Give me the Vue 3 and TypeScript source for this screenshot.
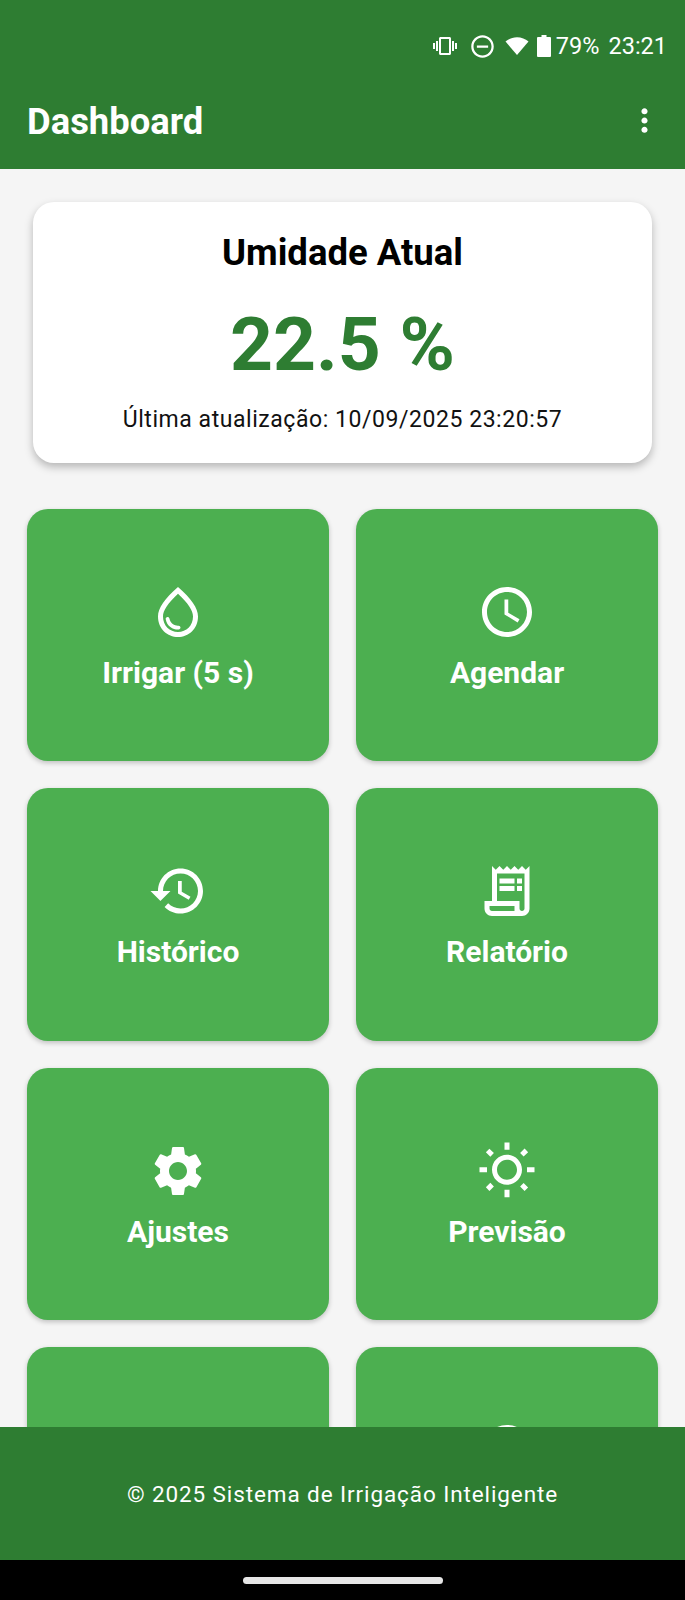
<script setup lang="ts">
interface Action { label: string; icon: string; extra?: string }
const actions: Action[] = [
  { label: 'Irrigar (5 s)', icon: 'M12,2c-5.33,4.55-8,8.48-8,11.8c0,4.98,3.8,8.2,8,8.2s8-3.22,8-8.2C20,10.48,17.33,6.55,12,2z M12,20c-3.35,0-6-2.57-6-6.2c0-2.34,1.95-5.44,6-9.14c4.05,3.7,6,6.79,6,9.14C18,17.43,15.35,20,12,20z M7.83,14c0.37,0,0.67,0.26,0.74,0.62c0.41,2.22,2.28,2.98,3.64,2.87c0.43-0.02,0.79,0.32,0.79,0.75c0,0.4-0.32,0.73-0.72,0.75c-2.13,0.13-4.62-1.09-5.19-4.12C7.01,14.42,7.37,14,7.83,14z' },
  { label: 'Agendar', icon: 'M11.99 2C6.47 2 2 6.48 2 12s4.47 10 9.99 10C17.52 22 22 17.52 22 12S17.52 2 11.99 2zM12 20c-4.42 0-8-3.58-8-8s3.58-8 8-8 8 3.58 8 8-3.58 8-8 8zM12.5 7H11v6l5.25 3.15.75-1.23-4.5-2.67z' },
  { label: 'Histórico', icon: 'M13 3c-4.97 0-9 4.03-9 9H1l3.89 3.89.07.14L9 12H6c0-3.87 3.13-7 7-7s7 3.13 7 7-3.13 7-7 7c-1.93 0-3.68-.79-4.94-2.06l-1.42 1.42C8.27 19.99 10.51 21 13 21c4.97 0 9-4.03 9-9s-4.03-9-9-9zm-1 5v5l4.28 2.54.72-1.21-3.5-2.08V8H12z' },
  { label: 'Relatório', icon: 'M19.5 3.5L18 2l-1.5 1.5L15 2l-1.5 1.5L12 2l-1.5 1.5L9 2 7.5 3.5 6 2v14H3v3c0 1.66 1.34 3 3 3h12c1.66 0 3-1.34 3-3V2l-1.5 1.5zM15 20H6c-.55 0-1-.45-1-1v-1h10v2zm4-1c0 .55-.45 1-1 1s-1-.45-1-1v-3H8V5h11v14zM9 7h6v2H9zM16 7h2v2h-2zM9 10h6v2H9zM16 10h2v2h-2z' },
  { label: 'Ajustes', icon: 'M19.14 12.94c.04-.3.06-.61.06-.94 0-.32-.02-.64-.07-.94l2.03-1.58c.18-.14.23-.41.12-.61l-1.92-3.32c-.12-.22-.37-.29-.59-.22l-2.39.96c-.5-.38-1.03-.7-1.62-.94l-.36-2.54c-.04-.24-.24-.41-.48-.41h-3.84c-.24 0-.43.17-.47.41l-.36 2.54c-.59.24-1.13.57-1.62.94l-2.39-.96c-.22-.08-.47 0-.59.22L2.74 8.87c-.12.21-.08.47.12.61l2.03 1.58c-.05.3-.09.63-.09.94s.02.64.07.94l-2.03 1.58c-.18.14-.23.41-.12.61l1.92 3.32c.12.22.37.29.59.22l2.39-.96c.5.38 1.03.7 1.62.94l.36 2.54c.05.24.24.41.48.41h3.84c.24 0 .44-.17.47-.41l.36-2.54c.59-.24 1.13-.56 1.62-.94l2.39.96c.22.08.47 0 .59-.22l1.92-3.32c.12-.22.07-.47-.12-.61l-2.01-1.58zM12 15.6c-1.98 0-3.6-1.62-3.6-3.6s1.62-3.6 3.6-3.6 3.6 1.62 3.6 3.6-1.62 3.6-3.6 3.6z' },
  { label: 'Previsão', icon: 'M6.76 4.84l-1.8-1.79-1.41 1.41 1.79 1.79zM1 10.5h3v2H1zM11 .55h2V3.5h-2zm8.04 2.495l1.408 1.407-1.79 1.79-1.407-1.408zm-1.8 15.115l1.79 1.8 1.41-1.41-1.8-1.79zM20 10.5h3v2h-3zm-8-5c-3.31 0-6 2.69-6 6s2.69 6 6 6 6-2.69 6-6-2.69-6-6-6zm0 10c-2.21 0-4-1.79-4-4s1.79-4 4-4 4 1.79 4 4-1.79 4-4 4zm-1 4h2v2.95h-2zm-7.45-.96l1.41 1.41 1.79-1.8-1.41-1.41z' },
  { label: '', icon: '' },
  { label: '', icon: 'M12 2C6.48 2 2 6.48 2 12s4.48 10 10 10 10-4.48 10-10S17.52 2 12 2z' },
]
</script>

<template>
  <div class="page">
    <header class="appbar">
      <div class="status">
        <svg class="st-vib" viewBox="0 0 24 24"><path d="M0 15h2V9H0v6zm3 2h2V7H3v10zm19-8v6h2V9h-2zm-3 8h2V7h-2v10zM16.5 3h-9C6.67 3 6 3.67 6 4.500v15c0 .83.67 1.500 1.500 1.500h9c.83 0 1.500-.67 1.500-1.500v-15c0-.83-.67-1.500-1.500-1.500zM16 19H8V5h8v14z" /></svg>
        <svg class="st-dnd" viewBox="0 0 24 24"><path d="M12 2C6.48 2 2 6.48 2 12s4.48 10 10 10 10-4.48 10-10S17.52 2 12 2zm0 18c-4.42 0-8-3.58-8-8s3.58-8 8-8 8 3.58 8 8-3.58 8-8 8zM7 11h10v2H7z" /></svg>
        <svg class="st-wifi" viewBox="0 0 24 24"><path d="M12 21L.5 7.500C3.600 4.900 7.600 3.200 12 3.200s8.400 1.700 11.500 4.300z" /></svg>
        <svg class="st-bat" viewBox="0 0 14 22"><path d="M4.500 0h5v2H13a1 1 0 0 1 1 1v18a1 1 0 0 1-1 1H1a1 1 0 0 1-1-1V3a1 1 0 0 1 1-1h3.500z" /></svg>
        <span class="st-pct">79%</span>
        <span class="st-time">23:21</span>
      </div>
      <div class="toolbar">
        <h1 class="title">Dashboard</h1>
        <svg class="menu" viewBox="0 0 24 24"><path d="M12 8c1.100 0 2-.9 2-2s-.9-2-2-2-2 .9-2 2 .9 2 2 2zm0 2c-1.100 0-2 .9-2 2s.9 2 2 2 2-.9 2-2-.9-2-2-2zm0 6c-1.100 0-2 .9-2 2s.9 2 2 2 2-.9 2-2-.9-2-2-2z" /></svg>
      </div>
    </header>

    <main class="content">
      <section class="card">
        <h2 class="card-title">Umidade Atual</h2>
        <div class="card-value">22.5 %</div>
        <p class="card-time">Última atualização: 10/09/2025 23:20:57</p>
      </section>

      <div class="grid">
        <button v-for="(a, i) in actions" :key="i" class="tile" type="button">
          <svg v-if="a.icon" class="tile-icon" viewBox="0 0 24 24"><path :d="a.icon" /></svg>
          <span v-if="a.label" class="tile-label">{{ a.label }}</span>
        </button>
      </div>
    </main>

    <footer class="footer">© 2025 Sistema de Irrigação Inteligente</footer>
    <div class="navbar"><span class="pill"></span></div>
  </div>
</template>

<style>
html, body { margin: 0; background: #f5f5f5; }
</style>

<style scoped>
.page {
  width: 685px;
  height: 1600px;
  display: flex;
  flex-direction: column;
  overflow: hidden;
  background: #f5f5f5;
  font-family: Roboto, "Liberation Sans", sans-serif;
}
.appbar {
  height: 169px;
  flex: none;
  background: #2e7d32;
  color: #fff;
  display: flex;
  flex-direction: column;
}
.status {
  height: 36px;
  padding: 28px 18px 0 0;
  display: flex;
  align-items: center;
  justify-content: flex-end;
  font-size: 23.5px;
  line-height: 36px;
}
.status svg { fill: #fff; display: block; flex: none; }
.st-vib { width: 24px; height: 24px; margin-right: 12px; }
.st-dnd { width: 27px; height: 27px; margin-right: 8px; }
.st-wifi { width: 26px; height: 24px; margin-right: 7px; }
.st-bat { width: 14px; height: 22px; margin-right: 5px; }
.st-pct { margin-right: 9px; }
.toolbar {
  flex: 1;
  display: flex;
  align-items: center;
  justify-content: space-between;
  padding: 11px 22px 0 27px;
}
.title { margin: 0; font-size: 36.4px; font-weight: 700; line-height: 40px; }
.menu { width: 37px; height: 37px; fill: #fff; margin-top: -3px; }
.content {
  flex: 1;
  min-height: 0;
  overflow: hidden;
  padding: 33px 27px 0;
}
.card {
  margin: 0 6px;
  height: 261px;
  box-sizing: border-box;
  padding: 31px 16px 0;
  background: #fff;
  border-radius: 21px;
  box-shadow: 0 4px 8px rgba(0, 0, 0, 0.26);
  text-align: center;
}
.card-title { margin: 0; font-size: 36.5px; line-height: 40px; font-weight: 700; color: #000; }
.card-value { margin-top: 26px; font-size: 75px; line-height: 90px; font-weight: 700; color: #2e7d32; }
.card-time { margin: 15px 0 0; font-size: 23px; line-height: 32px; letter-spacing: 0.55px; color: #111; }
.grid {
  margin-top: 46px;
  display: grid;
  grid-template-columns: 302px 302px;
  grid-auto-rows: 252.4px;
  justify-content: space-between;
  row-gap: 27px;
}
.tile {
  border: 0;
  margin: 0;
  padding: 73px 0 0;
  background: #4caf50;
  border-radius: 21px;
  box-shadow: 0 2px 5px rgba(0, 0, 0, 0.22);
  display: flex;
  flex-direction: column;
  align-items: center;
  justify-content: flex-start;
  color: #fff;
  font-family: inherit;
}
.tile-icon { width: 60px; height: 60px; fill: #fff; display: block; }
.tile-label { margin-top: 12px; font-size: 30px; line-height: 38px; font-weight: 700; }
.footer {
  height: 133px;
  flex: none;
  background: #2e7d32;
  color: #fff;
  display: flex;
  align-items: center;
  justify-content: center;
  font-size: 22.5px;
  letter-spacing: 0.9px;
}
.navbar {
  height: 40px;
  flex: none;
  background: #000;
  display: flex;
  align-items: center;
  justify-content: center;
}
.pill { width: 200px; height: 7px; border-radius: 4px; background: #e6e6e6; }
</style>
